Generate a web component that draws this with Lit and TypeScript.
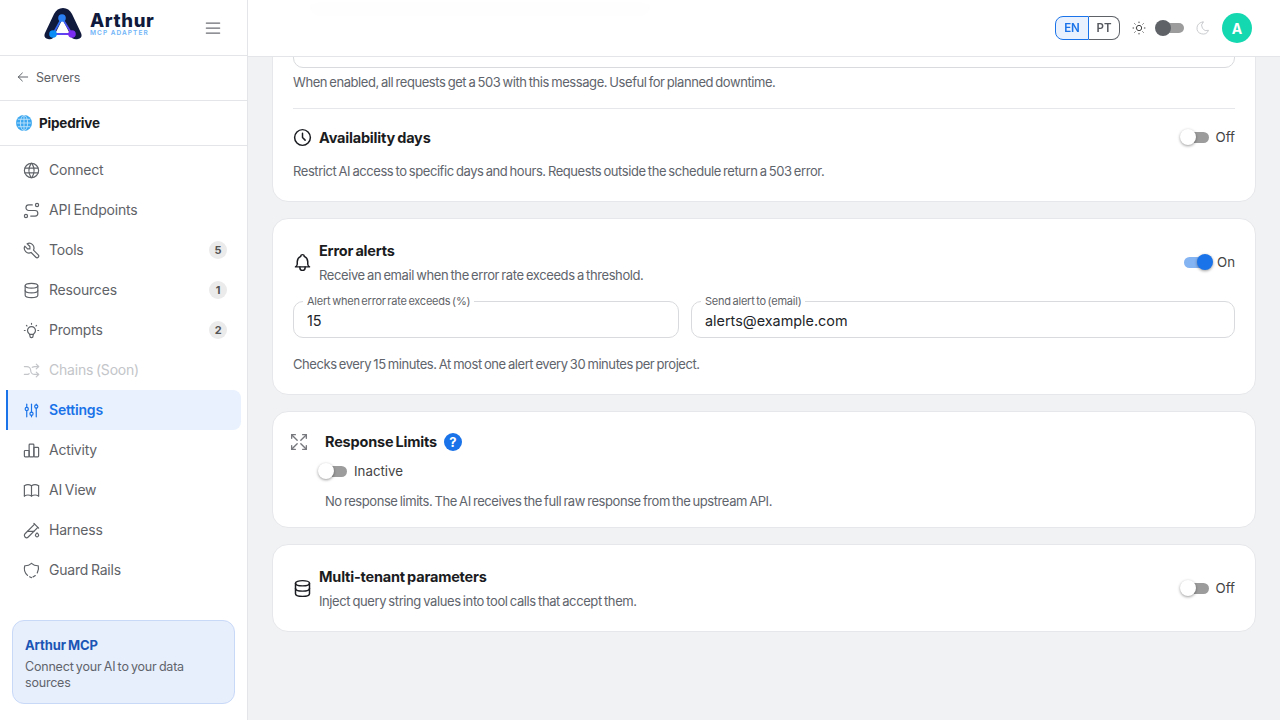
import { LitElement, html, css, svg } from "lit";
import { customElement } from "lit/decorators.js";

const P: Record<string, string[]> = {
  world: ["M3 12a9 9 0 1 0 18 0a9 9 0 0 0 -18 0", "M3.6 9h16.8", "M3.6 15h16.8", "M11.5 3a17 17 0 0 0 0 18", "M12.5 3a17 17 0 0 1 0 18"],
  route: ["M3 19a2 2 0 1 0 4 0a2 2 0 0 0 -4 0", "M19 7a2 2 0 1 0 0 -4a2 2 0 0 0 0 4z", "M11 19h5.5a3.5 3.5 0 0 0 0 -7h-8a3.5 3.5 0 0 1 0 -7h4.5"],
  tool: ["M7 10h3v-3l-3.5 -3.5a6 6 0 0 1 8 8l6 6a2 2 0 0 1 -3 3l-6 -6a6 6 0 0 1 -8 -8l3.5 3.5"],
  database: ["M4 6a8 3 0 1 0 16 0a8 3 0 1 0 -16 0", "M4 6v6a8 3 0 0 0 16 0v-6", "M4 12v6a8 3 0 0 0 16 0v-6"],
  bulb: ["M3 12h1m8 -9v1m8 8h1m-15.4 -6.4l.7 .7m12.1 -.7l-.7 .7", "M9 16a5 5 0 1 1 6 0a3.5 3.5 0 0 0 -1 3a2 2 0 0 1 -4 0a3.5 3.5 0 0 0 -1 -3", "M9.7 17l4.6 0"],
  shuffle: ["M18 4l3 3l-3 3", "M18 20l3 -3l-3 -3", "M3 7h3a5 5 0 0 1 5 5a5 5 0 0 0 5 5h5", "M21 7h-5a4.98 4.98 0 0 0 -3 1m-4 8a4.98 4.98 0 0 1 -3 1h-3"],
  adjust: ["M4 10a2 2 0 1 0 4 0a2 2 0 0 0 -4 0", "M6 4v4", "M6 12v8", "M10 16a2 2 0 1 0 4 0a2 2 0 0 0 -4 0", "M12 4v10", "M12 18v2", "M16 7a2 2 0 1 0 4 0a2 2 0 0 0 -4 0", "M18 4v1", "M18 9v11"],
  chart: ["M3 13a1 1 0 0 1 1 -1h4a1 1 0 0 1 1 1v6a1 1 0 0 1 -1 1h-4a1 1 0 0 1 -1 -1z", "M15 9a1 1 0 0 1 1 -1h4a1 1 0 0 1 1 1v10a1 1 0 0 1 -1 1h-4a1 1 0 0 1 -1 -1z", "M9 5a1 1 0 0 1 1 -1h4a1 1 0 0 1 1 1v14a1 1 0 0 1 -1 1h-4a1 1 0 0 1 -1 -1z"],
  book: ["M3 19a9 9 0 0 1 9 0a9 9 0 0 1 9 0", "M3 6a9 9 0 0 1 9 0a9 9 0 0 1 9 0", "M3 6l0 13", "M12 6l0 13", "M21 6l0 13"],
  pipe: ["M20 8.04l-12.122 12.124a2.857 2.857 0 1 1 -4.041 -4.04l12.122 -12.124", "M7 13h8", "M19 15l1.5 1.6a2 2 0 1 1 -3 0l1.5 -1.6z", "M15 3l6 6"],
  shield: ["M12 3a12 12 0 0 0 8.5 3a12 12 0 0 1 -1.2 9", "M16.8 18.4a12 12 0 0 1 -2.8 1.7", "M12 21a12 12 0 0 1 -2.4 -1.1", "M7 18.2a12 12 0 0 1 -3.5 -12.2a12 12 0 0 0 8.5 -3"],
  clock: ["M3 12a9 9 0 1 0 18 0a9 9 0 0 0 -18 0", "M12 7v5l3 3"],
  bell: ["M10 5a2 2 0 1 1 4 0a7 7 0 0 1 4 6v3a4 4 0 0 0 2 3h-16a4 4 0 0 0 2 -3v-3a7 7 0 0 1 4 -6", "M9 17v1a3 3 0 0 0 6 0v-1"],
  maximize: ["M16 4l4 0l0 4", "M14 10l6 -6", "M8 20l-4 0l0 -4", "M4 20l6 -6", "M16 20l4 0l0 -4", "M14 14l6 6", "M8 4l-4 0l0 4", "M4 4l6 6"],
  sun: ["M8 12a4 4 0 1 0 8 0a4 4 0 1 0 -8 0", "M3 12h1m8 -9v1m8 8h1m-9 8v1m-6.4 -15.4l.7 .7m12.1 -.7l-.7 .7m0 11.4l.7 .7m-12.1 -.7l-.7 .7"],
  moon: ["M12 3c.132 0 .263 0 .393 0a7.5 7.5 0 0 0 7.92 12.446a9 9 0 1 1 -8.313 -12.454z"],
  menu: ["M4 6l16 0", "M4 12l16 0", "M4 18l16 0"],
  back: ["M5 12l14 0", "M5 12l6 6", "M5 12l6 -6"],
};

const icon = (name: string, cls = "ic") => html`<svg class=${cls} viewBox="0 0 24 24" fill="none" stroke="currentColor" stroke-width="1.5" stroke-linecap="round" stroke-linejoin="round">${P[name].map((d) => svg`<path d=${d}></path>`)}</svg>`;

const NAV = [
  { label: "Connect", icon: "world" },
  { label: "API Endpoints", icon: "route" },
  { label: "Tools", icon: "tool", badge: "5" },
  { label: "Resources", icon: "database", badge: "1" },
  { label: "Prompts", icon: "bulb", badge: "2" },
  { label: "Chains (Soon)", icon: "shuffle", disabled: true },
  { label: "Settings", icon: "adjust", active: true },
  { label: "Activity", icon: "chart" },
  { label: "AI View", icon: "book" },
  { label: "Harness", icon: "pipe" },
  { label: "Guard Rails", icon: "shield" },
];

@customElement("app-root")
export class AppRoot extends LitElement {
  static styles = css`
    :host { display: block; width: 1280px; height: 720px; overflow: hidden; font-family: Inter, "Noto Sans", sans-serif; color: #1a1c21; background: #f1f2f4; letter-spacing: -0.2px; word-spacing: -1px; }
    * { box-sizing: border-box; }
    .app { display: flex; height: 720px; }
    .side { width: 248px; flex: none; background: #fff; border-right: 1px solid #e4e5e9; display: flex; flex-direction: column; height: 720px; }
    .brand { height: 56px; flex: none; border-bottom: 1px solid #e4e5e9; display: flex; align-items: center; padding: 0 24px 8px 44px; justify-content: space-between; color: #6b6e74; }
    .logo { display: flex; gap: 8px; align-items: flex-start; }
    .logo svg { width: 38px; height: 32px; display: block; }
    .word { display: flex; flex-direction: column; margin-top: 3px; }
    .word b { font-size: 18.5px; line-height: 18px; font-weight: 800; color: #101a3c; letter-spacing: 0.6px; }
    .word span { font-size: 6.5px; line-height: 8px; font-weight: 600; color: #6fb4f8; letter-spacing: 1.05px; word-spacing: 0; }
    .menu { width: 20px; height: 20px; margin-top: 8px; }
    .back { height: 45px; flex: none; border-bottom: 1px solid #e4e5e9; display: flex; align-items: center; gap: 5px; padding: 0 0 2px 15px; font-size: 12.5px; color: #5f6368; }
    .back svg { width: 16px; height: 16px; }
    .srv { height: 45px; flex: none; border-bottom: 1px solid #e4e5e9; display: flex; align-items: center; gap: 7px; padding-left: 16px; font-size: 13.5px; font-weight: 700; }
    .srv svg { width: 16px; height: 16px; }
    nav { padding-top: 4px; display: flex; flex-direction: column; }
    .item { height: 40px; margin-left: 6px; width: 235px; display: flex; align-items: center; gap: 8.5px; padding: 0 14px 0 13.5px; border-left: 2px solid transparent; font-size: 14px; color: #5f6368; }
    .item .ic { width: 19px; height: 19px; flex: none; }
    .item .lb { flex: 1; padding-bottom: 2px; }
    .item.off { color: #c3c5c9; }
    .item.on { background: #e9f1fe; border-left-color: #1a73e8; border-radius: 0 8px 8px 0; color: #1a73e8; font-weight: 600; }
    .badge { width: 18px; height: 18px; border-radius: 50%; background: #ebebeb; color: #555; font-size: 11px; font-weight: 700; display: flex; align-items: center; justify-content: center; }
    .promo { margin: auto 12px 16px; height: 84px; flex: none; border: 1px solid #c8d9f8; border-radius: 12px; background: #e8effc; padding: 15px 12px; }
    .promo b { display: block; font-size: 13px; line-height: 18px; font-weight: 700; color: #1b55b5; letter-spacing: -0.1px; }
    .promo p { margin: 5px 0 0; font-size: 12.5px; line-height: 16px; color: #60646c; }

    .main { flex: 1; position: relative; height: 720px; overflow: hidden; }
    .top { position: absolute; z-index: 2; top: 0; left: 0; right: 0; height: 57px; border-bottom: 1px solid #e4e5e9; background: rgba(255,255,255,.98); backdrop-filter: blur(6px); display: flex; align-items: center; justify-content: flex-end; padding-right: 28px; color: #5f6368; }
    .lang { display: flex; height: 24px; font-size: 11.5px; font-weight: 600; letter-spacing: 0; }
    .lang span { display: flex; align-items: center; justify-content: center; border: 1px solid #5f6368; }
    .lang .en { width: 34px; color: #1a73e8; background: #e9f1fe; border-color: #1a73e8; border-radius: 8px 0 0 8px; }
    .lang .pt { width: 31px; border-left: 0; border-radius: 0 8px 8px 0; color: #55585e; }
    .sun { width: 16px; height: 16px; margin-left: 11px; color: #444; }
    .moon { width: 16px; height: 16px; margin-left: 10.5px; color: #c9cbce; }
    .theme { width: 29px; height: 16px; margin-left: 8px; position: relative; flex: none; }
    .theme i { position: absolute; left: 1px; right: 0; top: 3px; height: 10px; border-radius: 5px; background: #9c9c9c; }
    .theme u { position: absolute; left: 0; top: 0; width: 16px; height: 16px; border-radius: 50%; background: #5f6368; }
    .avatar { width: 30px; height: 30px; border-radius: 50%; background: #14d8b0; color: #fff; font-size: 14px; font-weight: 700; display: flex; align-items: center; justify-content: center; margin-left: 11.5px; letter-spacing: 0; }

    .scroll { margin-top: -17px; padding: 0 24px; display: flex; flex-direction: column; gap: 16px; }
    .card { background: #fff; border: 1px solid #e6e7ea; border-radius: 16px; padding: 20px; }
    .card.c1 { padding-bottom: 21px; }
    .card.c2 { padding-bottom: 21px; }
    .card.c3 { padding-bottom: 17px; }
    .card.c4 { padding-bottom: 18px; }
    .ghost { width: 340px; height: 10px; margin-left: 17px; background: #8a8a8a; border-radius: 3px; }
    .blank { height: 38px; margin-top: 16px; border: 1px solid #d9dadd; border-radius: 10px; }
    .help { font-size: 13px; line-height: 18px; color: #60646c; margin: 0; letter-spacing: -0.43px; }
    .c1 .blank + .help { margin-top: 5px; }
    hr { border: 0; height: 1px; background: #e6e7ea; margin: 17px 0 17px; }
    .row { display: flex; align-items: center; justify-content: space-between; }
    .hd { display: flex; align-items: center; gap: 6.5px; }
    .hd .ic { width: 21px; height: 21px; flex: none; color: #1a1c21; margin: -2px 0 0 -1.5px; stroke-width: 1.7; }
    .t { font-size: 14.5px; line-height: 24px; font-weight: 700; color: #1a1c21; }
    .s { font-size: 13px; line-height: 24px; color: #60646c; letter-spacing: -0.4px; }
    .tg { display: flex; align-items: center; gap: 6px; font-size: 13.3px; color: #444; letter-spacing: 0; margin-top: -2px; }
    .tg.active { gap: 4px; }
    .sw { width: 30px; height: 16px; position: relative; flex: none; }
    .sw i { position: absolute; left: 1px; right: 1px; top: 3px; height: 11px; border-radius: 6px; background: #9c9c9c; }
    .sw u { position: absolute; left: 0; top: 0; width: 16px; height: 16px; border-radius: 50%; background: #fff; box-shadow: 0 1px 3px rgba(0,0,0,.4); }
    .sw.on i { background: #85b4f3; }
    .sw.on u { left: 14px; background: #1a73e8; }
    .c1 .help.after { margin-top: 12px; }
    .fields { display: flex; gap: 12px; margin-top: 14px; }
    .fld { position: relative; height: 37px; border: 1px solid #d9dadd; border-radius: 10px; display: flex; align-items: center; padding: 2px 13px 0; font-size: 14.4px; color: #22252a; letter-spacing: 0; word-spacing: 0; }
    .fld.a { width: 386px; }
    .fld.b { flex: 1; }
    .fld label { position: absolute; left: 9px; top: -7px; background: #fff; padding: 0 4px; font-size: 11px; line-height: 12px; color: #5f6368; letter-spacing: -0.22px; word-spacing: -1.2px; }
    .c2 .help { margin-top: 17px; }
    .rl { display: flex; align-items: center; height: 20px; }
    .rl .mx { width: 22px; height: 22px; margin-left: -5px; color: #77797f; flex: none; stroke-width: 1.5; }
    .rl .t { margin-left: 15px; line-height: 20px; }
    .q { width: 18px; height: 18px; margin-left: 7px; border-radius: 50%; background: #1a73e8; color: #fff; font-size: 13px; font-weight: 700; display: flex; align-items: center; justify-content: center; letter-spacing: 0; }
    .state { display: flex; align-items: center; gap: 6px; margin: 7px 0 0 25px; height: 24px; font-size: 13.3px; color: #444; letter-spacing: 0; }
    .c3 .help { margin: 9px 0 0 32px; }
  `;

  sw(on = false) {
    return html`<span class="sw ${on ? "on" : ""}"><i></i><u></u></span>`;
  }

  render() {
    return html`<div class="app">
      <aside class="side">
        <div class="brand">
          <div class="logo">
            <svg viewBox="0 0 38 32" aria-hidden="true">
              <defs>
                <linearGradient id="lg" x1="0" y1="0" x2="1" y2="1"><stop offset="0" stop-color="#0c8df5"/><stop offset="1" stop-color="#7a2cf0"/></linearGradient>
              </defs>
              <path fill="#101a3c" d="M1 25 L10 6 Q13 0 19 0 Q25 0 28 6 L37 25 Q39 30 34 31 Q31 32 28 30 L18.5 11 L9 30 Q7 32 4 31 Q-1 30 1 25Z"/>
              <path d="M18 10 L9 26 H28 Z" fill="none" stroke="url(#lg)" stroke-width="1.8"/>
              <circle cx="18" cy="10" r="3.8" fill="#2a7ff5"/>
              <circle cx="9" cy="26" r="3.8" fill="#0c8df5"/>
              <circle cx="28" cy="26" r="3.8" fill="#7a2cf0"/>
            </svg>
            <div class="word"><b>Arthur</b><span>MCP ADAPTER</span></div>
          </div>
          ${icon("menu", "menu")}
        </div>
        <div class="back">${icon("back")}<span>Servers</span></div>
        <div class="srv">
          <svg viewBox="0 0 16 16" aria-hidden="true"><circle cx="8" cy="8" r="8" fill="#3aa7f0"/><g fill="none" stroke="#bfe3fb" stroke-width=".9"><ellipse cx="8" cy="8" rx="3.6" ry="7.6"/><path d="M8 .4v15.2M.6 8h14.8M1.8 4.3h12.4M1.8 11.7h12.4"/></g></svg>
          <span>Pipedrive</span>
        </div>
        <nav>
          ${NAV.map((n) => html`<div class="item ${n.active ? "on" : ""} ${n.disabled ? "off" : ""}">${icon(n.icon)}<span class="lb">${n.label}</span>${n.badge ? html`<span class="badge">${n.badge}</span>` : ""}</div>`)}
        </nav>
        <div class="promo"><b>Arthur MCP</b><p>Connect your AI to your data sources</p></div>
      </aside>
      <main class="main">
        <header class="top">
          <div class="lang"><span class="en">EN</span><span class="pt">PT</span></div>
          ${icon("sun", "sun")}
          <span class="theme"><i></i><u></u></span>
          ${icon("moon", "moon")}
          <div class="avatar">A</div>
        </header>
        <div class="scroll">
          <section class="card c1">
            <div class="ghost"></div>
            <div class="blank"></div>
            <p class="help">When enabled, all requests get a 503 with this message. Useful for planned downtime.</p>
            <hr />
            <div class="row">
              <div class="hd">${icon("clock")}<span class="t">Availability days</span></div>
              <div class="tg">${this.sw()}<span>Off</span></div>
            </div>
            <p class="help after">Restrict AI access to specific days and hours. Requests outside the schedule return a 503 error.</p>
          </section>
          <section class="card c2">
            <div class="row">
              <div class="hd">${icon("bell")}<div><div class="t">Error alerts</div><div class="s">Receive an email when the error rate exceeds a threshold.</div></div></div>
              <div class="tg active">${this.sw(true)}<span>On</span></div>
            </div>
            <div class="fields">
              <div class="fld a"><label>Alert when error rate exceeds (%)</label>15</div>
              <div class="fld b"><label>Send alert to (email)</label>alerts@example.com</div>
            </div>
            <p class="help">Checks every 15 minutes. At most one alert every 30 minutes per project.</p>
          </section>
          <section class="card c3">
            <div class="rl">${icon("maximize", "mx")}<span class="t">Response Limits</span><span class="q">?</span></div>
            <div class="state">${this.sw()}<span>Inactive</span></div>
            <p class="help">No response limits. The AI receives the full raw response from the upstream API.</p>
          </section>
          <section class="card c4">
            <div class="row">
              <div class="hd">${icon("database")}<div><div class="t">Multi-tenant parameters</div><div class="s">Inject query string values into tool calls that accept them.</div></div></div>
              <div class="tg">${this.sw()}<span>Off</span></div>
            </div>
          </section>
        </div>
      </main>
    </div>`;
  }
}
